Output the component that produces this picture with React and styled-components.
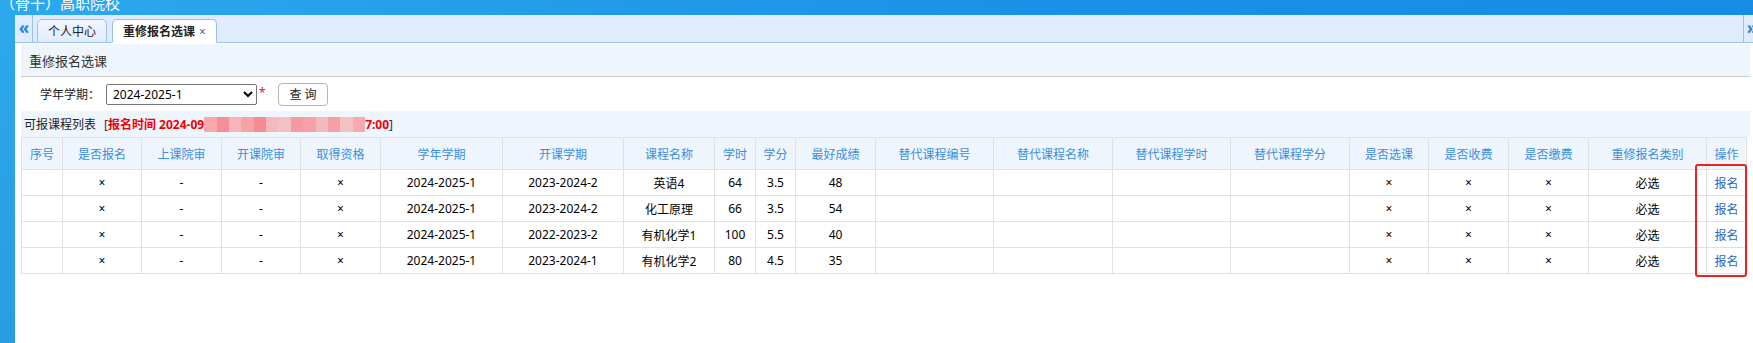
import React from "react"
import styled, { createGlobalStyle } from "styled-components"

const GlobalStyle = createGlobalStyle`
  html, body {
    margin: 0;
    padding: 0;
    background: #ffffff;
    overflow: hidden;
  }
  body {
    font-family: "Noto Sans", "Noto Sans CJK SC", sans-serif;
    font-size: 12px;
    color: #000;
  }
`

const columns = [
  { title: "序号", width: 41 },
  { title: "是否报名", width: 79 },
  { title: "上课院审", width: 80 },
  { title: "开课院审", width: 79 },
  { title: "取得资格", width: 80 },
  { title: "学年学期", width: 122 },
  { title: "开课学期", width: 121 },
  { title: "课程名称", width: 91 },
  { title: "学时", width: 41 },
  { title: "学分", width: 40 },
  { title: "最好成绩", width: 80 },
  { title: "替代课程编号", width: 118 },
  { title: "替代课程名称", width: 119 },
  { title: "替代课程学时", width: 118 },
  { title: "替代课程学分", width: 119 },
  { title: "是否选课", width: 79 },
  { title: "是否收费", width: 80 },
  { title: "是否缴费", width: 80 },
  { title: "重修报名类别", width: 118 },
  { title: "操作", width: 40 },
]

const rows = [
  ["2024-2025-1", "2023-2024-2", "英语4", "64", "3.5", "48"],
  ["2024-2025-1", "2023-2024-2", "化工原理", "66", "3.5", "54"],
  ["2024-2025-1", "2022-2023-2", "有机化学1", "100", "5.5", "40"],
  ["2024-2025-1", "2023-2024-1", "有机化学2", "80", "4.5", "35"],
]

// pink mosaic that hides part of the sign-up time
const blur = ["#f7a9ae", "#f48f95", "#f5b5ba", "#f6a3a8", "#f38d93", "#f4b8bd", "#f3c0c4", "#f49ba1", "#f7a0a6", "#f3b9bd", "#f6a0a6", "#f2c3c6", "#f7aab0"]

const App = () => (
  <Page>
    <GlobalStyle />
    <TopBar>
      <SchoolName>（骨干）高职院校</SchoolName>
    </TopBar>
    <Body>
      <Sidebar />
      <Main>
        <TabBar>
          <ScrollBtn>«</ScrollBtn>
          <Tab>个人中心</Tab>
          <Tab active>
            重修报名选课<TabClose>×</TabClose>
          </Tab>
          <TabSpacer />
          <ScrollBtn right>»</ScrollBtn>
        </TabBar>
        <Content>
          <PageTitle>重修报名选课</PageTitle>
          <FormRow>
            <Label>学年学期：</Label>
            <Select defaultValue="2024-2025-1">
              <option>2024-2025-1</option>
              <option>2023-2024-2</option>
            </Select>
            <Required>*</Required>
            <QueryButton>查 询</QueryButton>
          </FormRow>
          <ListHeader>
            <ListTitle>可报课程列表</ListTitle>
            <Bracket>[</Bracket>
            <RedText>报名时间 2024-09</RedText>
            <Mosaic>
              {blur.map((c, i) => (
                <MosaicCell key={i} style={{ background: c }} />
              ))}
            </Mosaic>
            <RedText>7:00</RedText>
            <Bracket>]</Bracket>
          </ListHeader>
          <TableWrap>
            <Table>
              <colgroup>
                {columns.map((c) => (
                  <col key={c.title} style={{ width: c.width }} />
                ))}
              </colgroup>
              <thead>
                <tr>
                  {columns.map((c) => (
                    <Th key={c.title}>{c.title}</Th>
                  ))}
                </tr>
              </thead>
              <tbody>
                {rows.map((r, i) => (
                  <tr key={i}>
                    <Td></Td>
                    <Td>×</Td>
                    <Td>-</Td>
                    <Td>-</Td>
                    <Td>×</Td>
                    {r.map((v, j) => (
                      <Td key={j}>{v}</Td>
                    ))}
                    <Td></Td>
                    <Td></Td>
                    <Td></Td>
                    <Td></Td>
                    <Td>×</Td>
                    <Td>×</Td>
                    <Td>×</Td>
                    <Td>必选</Td>
                    <Td>
                      <ActionLink>报名</ActionLink>
                    </Td>
                  </tr>
                ))}
              </tbody>
            </Table>
            <Highlight />
          </TableWrap>
        </Content>
      </Main>
    </Body>
  </Page>
)

const Page = styled.div`
  width: 1753px;
  height: 343px;
  display: flex;
  flex-direction: column;
  overflow: hidden;
`

const TopBar = styled.div`
  height: 15px;
  flex-shrink: 0;
  overflow: hidden;
  background: linear-gradient(to right, #2ca9ee, #1b90e6 60%, #188ce4);
`

const SchoolName = styled.div`
  margin-top: -5px;
  font-size: 15px;
  line-height: 16px;
  color: #ffffff;
  white-space: nowrap;
`

const Body = styled.div`
  flex: 1;
  display: flex;
`

const Sidebar = styled.div`
  width: 15px;
  flex-shrink: 0;
  background: linear-gradient(to bottom, #2ca8ec, #2a9ce2);
`

const Main = styled.div`
  flex: 1;
  display: flex;
  flex-direction: column;
  min-width: 0;
  overflow: hidden;
`

const TabBar = styled.div`
  height: 27px;
  display: flex;
  align-items: flex-end;
  background: #dfecfe;
  border-bottom: 1px solid #9dbfea;
`

const ScrollBtn = styled.div`
  width: 17px;
  height: 27px;
  flex-shrink: 0;
  display: flex;
  align-items: center;
  justify-content: center;
  color: #1d86e3;
  font-size: 17px;
  font-weight: bold;
  line-height: 1;
  margin-left: ${(p) => (p.right ? "0" : "1px")};
  margin-right: ${(p) => (p.right ? "-7px" : "0")};
  border-left: ${(p) => (p.right ? "1px solid #9dbfea" : "none")};
  border-right: ${(p) => (p.right ? "none" : "1px solid #9dbfea")};
  box-sizing: border-box;
  padding-bottom: 3px;
`

const TabSpacer = styled.div`
  flex: 1;
`

const Tab = styled.div`
  height: 24px;
  box-sizing: border-box;
  margin-left: ${(p) => (p.active ? "5px" : "4px")};
  margin-bottom: -1px;
  padding: 0 10px;
  display: flex;
  align-items: center;
  font-size: 12px;
  font-weight: ${(p) => (p.active ? "bold" : "normal")};
  color: #222;
  border: 1px solid #9dbfea;
  border-bottom: ${(p) => (p.active ? "1px solid #ffffff" : "1px solid #9dbfea")};
  border-radius: 5px 5px 0 0;
  background: ${(p) => (p.active ? "#ffffff" : "linear-gradient(#f2f7ff, #dfecfe)")};
`

const TabClose = styled.span`
  margin-left: 4px;
  font-weight: normal;
  color: #666;
  font-size: 12px;
`

const Content = styled.div`
  flex: 1;
  padding: 1px 3px 0 6px;
  background: #ffffff;
`

const PageTitle = styled.div`
  height: 32px;
  display: flex;
  align-items: center;
  padding-left: 8px;
  font-size: 13px;
  color: #333;
  background: #eef5fc;
  border-bottom: 1px solid #cfcfcf;
`

const FormRow = styled.div`
  height: 34px;
  display: flex;
  align-items: center;
  padding-left: 19px;
`

const Label = styled.span`
  width: 66px;
  font-size: 12px;
  color: #1a1a1a;
`

const Select = styled.select`
  width: 151px;
  height: 21px;
  font-family: "Noto Sans", "Noto Sans CJK SC", sans-serif;
  font-size: 12px;
  color: #000;
  border: 1px solid #767676;
  border-radius: 2px;
  background: #fff;
  padding: 0 2px;
`

const Required = styled.span`
  color: #e0201f;
  font-size: 12px;
  align-self: flex-start;
  margin-top: 7px;
  width: 19px;
  padding-left: 2px;
`

const QueryButton = styled.button`
  width: 50px;
  height: 23px;
  font-family: "Noto Sans", "Noto Sans CJK SC", sans-serif;
  font-size: 12px;
  color: #222;
  background: #ffffff;
  border: 1px solid #b5b5b5;
  border-radius: 4px;
  padding: 0;
`

const ListHeader = styled.div`
  height: 26px;
  display: flex;
  align-items: center;
  padding-left: 3px;
  background: #eef5fc;
  font-size: 12px;
  font-weight: bold;
`

const ListTitle = styled.span`
  color: #222;
  font-weight: normal;
  margin-right: 8px;
`

const Bracket = styled.span`
  color: #333;
  font-weight: normal;
`

const RedText = styled.span`
  color: #f00000;
`

const Mosaic = styled.span`
  display: inline-flex;
  height: 15px;
  width: 161px;
`

const MosaicCell = styled.span`
  flex: 1;
`

const TableWrap = styled.div`
  position: relative;
  width: 1725px;
`

const Table = styled.table`
  width: 1725px;
  table-layout: fixed;
  border-collapse: collapse;
  font-size: 12px;
`

const Th = styled.th`
  height: 31px;
  padding: 0;
  font-weight: normal;
  color: #3a8ee0;
  background: #eef5fc;
  border: 1px solid #e1e1e1;
  text-align: center;
  white-space: nowrap;
`

const Td = styled.td`
  height: 25px;
  padding: 0;
  text-align: center;
  color: #000;
  border: 1px solid #e1e1e1;
  white-space: nowrap;
`

const ActionLink = styled.a`
  color: #2b63c4;
  cursor: pointer;
`

const Highlight = styled.div`
  position: absolute;
  left: 1674px;
  top: 27px;
  width: 48px;
  height: 109px;
  border: 2px solid #ee2020;
  border-radius: 3px;
  pointer-events: none;
`

export default App
